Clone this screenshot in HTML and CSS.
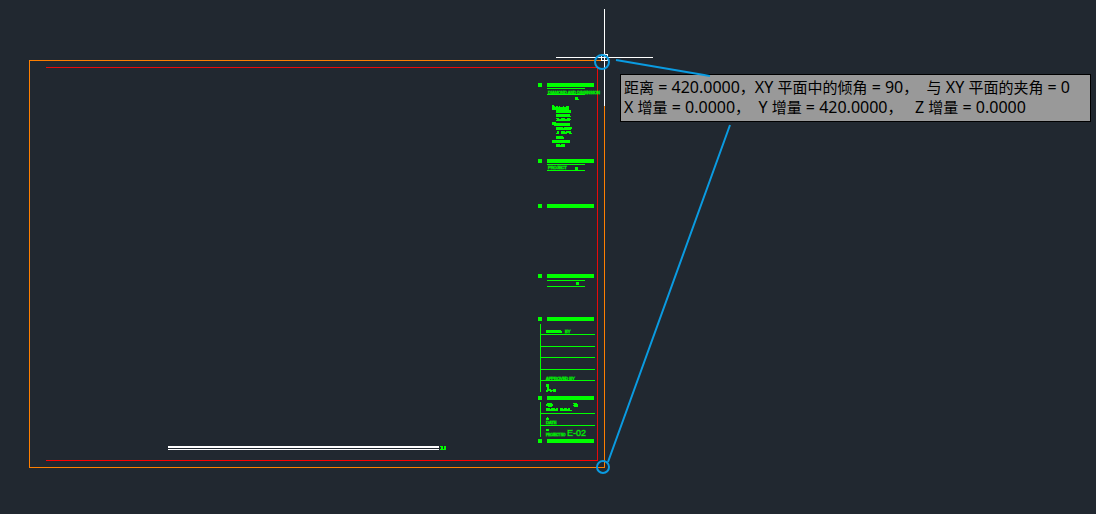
FILE: index.html
```html
<!DOCTYPE html>
<html lang="zh-CN">
<head>
<meta charset="utf-8">
<meta name="viewport" content="width=device-width, initial-scale=1">
<title>CAD 测量</title>
<link rel="stylesheet" href="styles.css">
</head>
<body>
<main class="workspace">
  <svg class="drawing" aria-label="图纸">
    <g class="frame">
      <rect x="29" y="60" width="576" height="1"/>
      <rect x="29" y="60" width="1" height="408"/>
      <rect x="29" y="467" width="576" height="1"/>
      <rect x="604" y="106" width="1" height="362"/>
    </g>
    <g class="margin">
      <rect x="46" y="67" width="552" height="1"/>
      <rect x="597" y="67" width="1" height="394"/>
    </g>
    <rect class="margin-base" x="46" y="460" width="552" height="1"/>
    <g class="white">
      <rect x="168" y="446" width="271" height="2"/>
      <rect x="168" y="449" width="271" height="1"/>
    </g>
    <g class="green">
      <!-- section headings -->
      <path d="M538 83h4v4h-4zM547 83h47v4h-47zM538 159h4v4h-4zM547 159h47v4h-47zM538 204h4v4h-4zM547 204h47v4h-47zM538 274h4v4h-4zM547 274h47v4h-47zM538 317h4v4h-4zM547 317h47v4h-47zM538 396h4v4h-4zM547 396h47v4h-47zM538 439h4v4h-4zM547 439h47v4h-47z"/>
      <!-- rules -->
      <path d="M547 88h38v1h-38zM547 94h38v1h-38zM547 164h38v1h-38zM547 170h38v1h-38zM547 280h38v1h-38zM547 286h38v1h-38z"/>
      <path d="M540 324h1v68h-1zM541 334h54v1h-54zM541 346h54v1h-54zM541 357h54v1h-54zM541 369h54v1h-54zM541 380h54v1h-54zM540 402h1v35h-1zM541 413h54v1h-54zM541 425h54v1h-54z"/>
      <!-- revision markers -->
      <path d="M575 97h3v3h-3zM578 99h1v1h-1zM575 167h3v3h-3zM576 282h3v3h-3zM546 384h3v3h-3zM546 418h3v2h-3zM547 417h1v1h-1zM546 429h3v2h-3z"/>
      <!-- address block, below legible size -->
      <path d="M552 105h2v1h1v1h1v-1h2v1h1v-1h1v1h3v-1h1v1h2v-1h3v4h-17zM556 110h15v3h-15zM556 114h14v2h1v1h-15zM556 118h3v1h2v-1h4v1h2v-1h3v1h1v1h-1v1h-14v-1h1v-1h-1zM552 122h4v1h14v3h-16v-1h-2zM556 127h7v1h1v-1h8v2h-1v1h-15zM557 131h2v2h2v-2h4v1h1v-1h5v2h1v1h-3v-1h-2v1h-6v-1h-2v1h-3v-1h1zM556 136h7v1h1v2h-8zM552 140h18v3h-18zM556 144h4v1h1v-1h4v3h-9z"/>
      <path d="M546 330h15v1h1v2h-16zM547 387h2v2h2v1h2v-1h3v3h-3v-1h-1v1h-2v-1h-2v1h-2v-2h1zM546 404h1v-1h5v1h1v2h-1v1h-4v-1h-2zM573 403h4v1h1v3h-4v-1h-1v-1h1v-1h-1zM546 408h4v1h1v-1h4v1h1v-1h2v3h-12zM560 408h3v1h1v-1h3v1h1v-1h2v2h2v1h-12z"/>
      <path d="M440 446h3v3h1v1h-4v-1h1v-2h-1zM444 446h2v4h-2z"/>
      <text class="tiny" x="548" y="94">DIAMOND AND DIMENSION</text>
      <text class="tiny" x="548" y="169">PROJECT</text>
      <text class="tiny" x="565" y="333">BY</text>
      <text class="tiny" x="546" y="380">APPROVED BY</text>
      <text class="tiny" x="546" y="424">DATE</text>
      <text class="tiny small" x="546" y="436">PROJECT NO</text>
      <text class="sheet" x="567" y="436">E-02</text>
    </g>
    <g class="white">
      <rect x="604" y="9" width="1" height="97"/>
      <rect x="556" y="57" width="97" height="1"/>
      <path d="M601 54h7v7h-7zM602 55v5h5v-5z" fill-rule="evenodd"/>
    </g>
  </svg>
  <output class="measure"><span>距离</span> = 420.0000<span>，</span>XY <span>平面中的倾角</span> = 90<span>，</span>  <span>与</span> XY <span>平面的夹角</span> = 0
X <span>增量</span> = 0.0000<span>，</span>  Y <span>增量</span> = 420.0000<span>，</span>   Z <span>增量</span> = 0.0000</output>
  <svg class="drawing pointer" aria-hidden="true">
    <circle cx="602" cy="62" r="7"/>
    <circle cx="603" cy="467" r="6"/>
    <path d="M616 60L710 76M730 125L608 462"/>
  </svg>
</main>
</body>
</html>
```
FILE: styles.css
```css
body { margin: 0; background: #212830; }
.workspace { position: relative; min-height: 100vh; overflow: hidden; }
.drawing { position: absolute; inset: 0; width: 100%; height: 100%; shape-rendering: crispEdges; }
.frame { fill: #ff7f00; }
.margin { fill: #e60a0a; }
.margin-base { fill: #ff0000; }
.white { fill: #ffffff; }
.green { fill: #00ff00; font-family: "Liberation Sans", Arial, sans-serif; }
.tiny { font-size: 4px; stroke: #00ff00; stroke-width: 1px; stroke-opacity: 60%; }
.small { font-size: 3px; }
.sheet { font-size: 9px; stroke: #00ff00; stroke-width: 1px; stroke-opacity: 30%; }
.pointer { fill: none; stroke: #0a9be1; stroke-width: 2px; shape-rendering: auto; pointer-events: none; }
.measure {
  position: absolute;
  left: 620px;
  top: 74px;
  box-sizing: border-box;
  width: 471px;
  padding: 2px 3px 4px;
  border: 1px solid #000;
  background: #999;
  color: #000;
  font: 16px/20px "Noto Sans", "Noto Sans CJK SC", sans-serif;
  white-space: pre;
}
.measure span { font-size: 15px; line-height: 1; }
```
